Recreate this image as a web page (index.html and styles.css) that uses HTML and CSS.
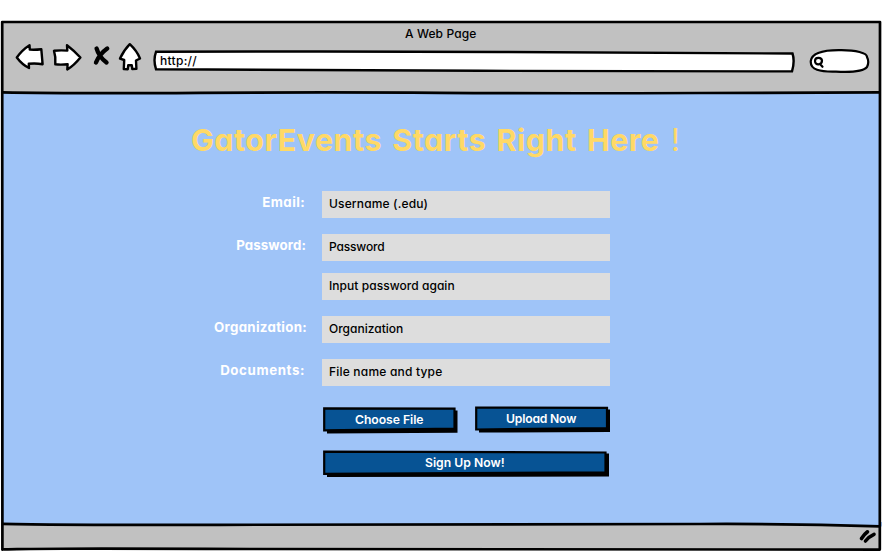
FILE: index.html
```html
<!DOCTYPE html>
<html lang="en">
<head>
<meta charset="utf-8">
<title>A Web Page</title>
<link rel="stylesheet" href="styles.css">
</head>
<body>
<div class="window">
  <header class="chrome">
    <div class="chrome-title"><span class="t-page">A Web Page</span></div>
    <div class="toolbar">
      <svg class="nav" width="126" height="32" viewBox="14 42 126 32">
        <g fill="#fff" stroke="#000" stroke-width="2.4" stroke-linejoin="round">
          <path d="M16.8 57.5Q22 50 29.5 45.2L29.8 49.6Q36 49.9 41.3 49.2L42.6 64.2Q36 63.2 28.8 63.8L29 68Q22 64.5 16.8 57.5Z"/>
          <path d="M54 50.8Q60 50 67.3 50.6L67 45.2Q74 50.5 80.4 57.5 74 65.5 67.3 69.5L67.6 64.2Q61 65 55.3 64.3 56 57 54 50.8Z"/>
          <path d="M129.8 44.2Q137 51 140 58.5L136 60.5 136.4 68.7 132.3 69 131.8 65.3 128.2 65.3 127.8 69.2 123.8 69 124.2 60 120 58.6Q124 50 129.8 44.2Z"/>
        </g>
        <path d="M96.6 48.5Q99 57 106.5 62.500M107.2 48.5Q99.500 54 96 62.5" fill="none" stroke="#000" stroke-width="4.4" stroke-linecap="round"/>
      </svg>
      <div class="address">
        <svg width="644" height="26" viewBox="152 48 644 26"><path d="M156 51.8Q350 51 500 52T792.5 53.5Q795 61 792 71.4Q600 71.7 480 70.8T156 69.2Q153 60 156 51.8Z" fill="#fff" stroke="#000" stroke-width="2.4"/></svg>
        <span class="url">http://</span>
      </div>
      <svg class="search" width="62" height="28" viewBox="808 48 62 28">
        <path d="M810.8 61C812 53 822 50 840 50.2C856 50 867 53 867 57Q869.5 62 867 67C863 72 850 72.3 836 71.6C820 72 810 70 810.8 61Z" fill="#fff" stroke="#000" stroke-width="2.2"/>
        <path d="M815 61C815 57 821.5 57 822 60.5C822 65 815 66 815 61ZM820 64 822.5 66.8" fill="none" stroke="#000" stroke-width="2.2" stroke-linecap="round"/>
      </svg>
    </div>
  </header>
  <main class="page">
    <h1><span class="t-title">GatorEvents Starts Right Here</span><span class="bang">!</span></h1>
    <form class="form">
      <label class="l-email">Email:</label><div class="field f-user">Username (.edu)</div>
      <label class="l-pass">Password:</label><div class="field f-pass">Password</div>
      <div class="field again f-again">Input password again</div>
      <label class="l-org">Organization:</label><div class="field f-org">Organization</div>
      <label class="l-doc">Documents:</label><div class="field f-file">File name and type</div>
      <div class="actions">
        <div class="btn b-choose">
          <svg width="136" height="28" viewBox="0 0 136 28"><path d="M4 5 131 3.5 134.5 3.5V25.8L4 26.6Z"/><path class="face" d="M1.2 1.4 131.5 1.7V21.6L1.2 23.3Z"/></svg>
          <span>Choose File</span>
        </div>
        <div class="btn b-upload">
          <svg width="136" height="28" viewBox="0 0 136 28"><path d="M4 5 135 3.5V26L4 26.6Z"/><path class="face" d="M1.2 1.6 132 1.8V22L1.2 23.5Z"/></svg>
          <span>Upload Now</span>
        </div>
      </div>
      <div class="btn signup">
        <svg width="287" height="28" viewBox="0 0 287 28"><path d="M4 5 286 3.5V26.5L4 27Z"/><path class="face" d="M1.2 1.6 282.5 2.5V22.3L1.2 23.8Z"/></svg>
        <span>Sign Up Now!</span>
      </div>
    </form>
  </main>
  <footer class="status">
    <svg width="18" height="16" viewBox="859 531 18 16"><path d="M861.5 540.5Q864 536.500 867.5 533.8M865.5 543 Q869 538.500 874 536.300" fill="none" stroke="#000" stroke-width="3.6" stroke-linecap="round"/></svg>
  </footer>
  <svg class="outline" width="882" height="552" viewBox="0 0 882 552">
    <path class="gap" d="M700 522 882 522V526.5L790 524Z"/>
    <path stroke-linejoin="round" d="M2.2 22Q440 21.2 880 22Q880.5 280 879.8 549.6Q500 549.8 250 549T2.4 549.6Q1.2 280 2.2 22Z"/>
    <path d="M2 92.3Q70 93.6 200 92.8T440 92.8T700 93T880 92.4"/>
    <path d="M2 523.8Q60 525 220 524.8T700 524Q790 523.5 880 526.4"/>
  </svg>
</div>
</body>
</html>
```
FILE: styles.css
```css
* { box-sizing: border-box; }
body { margin: 0; background: #fff; font-family: Inter, "Liberation Sans", sans-serif; font-feature-settings: "cv11" 1; color: #000; }
.window { position: relative; width: 882px; height: 552px; padding: 21px 2px 2px; display: flex; flex-direction: column; overflow: hidden; }
.outline { position: absolute; inset: 0; fill: none; stroke: #000; stroke-width: 2.7; pointer-events: none; }
.outline .gap { fill: #9fc4f8; stroke: none; }
.chrome { height: 72px; background: #c1c1c1; }
.chrome-title { height: 21px; padding-top: 5px; font-size: 12px; font-weight: 500; letter-spacing: .1px; line-height: 16px; padding-left: 403px; }
.toolbar { display: flex; align-items: flex-start; padding-left: 12px; }
.nav { display: block; flex: none; overflow: visible; }
.address { position: relative; flex: none; margin: 6px 0 0 12px; height: 26px; }
.address svg { display: block; }
.url { position: absolute; left: 8px; top: 4px; font-size: 12px; font-weight: 500; letter-spacing: .3px; line-height: 17px; }
.search { flex: none; margin: 6px 0 0 12px; }
.page { flex: 1; background: #9fc4f8; }
h1 { margin: 28px 0 0 189px; height: 70px; font-size: 30.5px; line-height: 37px; font-weight: 700; color: #ffd966; display: flex; white-space: nowrap; }
.t-title { width: 480px; letter-spacing: .45px; word-spacing: 2.7px; }
.bang { font-weight: 400; }
.form { display: grid; grid-template-columns: 305px 288px; column-gap: 15px; row-gap: 16px; }
label { height: 27px; line-height: 23px; font-size: 13.3px; font-weight: 700; color: #fff; text-align: right; white-space: nowrap; }
.l-email { padding-right: 2px; letter-spacing: .4px; }
.l-pass { padding-right: 1px; letter-spacing: .1px; }
.l-org { letter-spacing: .3px; }
.l-doc { padding-right: 2px; letter-spacing: .6px; }
.field { grid-column: 2; height: 27px; padding-left: 7px; background: #ddd; font-size: 12px; font-weight: 500; line-height: 25px; white-space: nowrap; }
.f-user { letter-spacing: .15px; }
.f-pass { letter-spacing: -.15px; }
.f-again { letter-spacing: .05px; }
.f-file { letter-spacing: .2px; }
.again { margin-top: -4px; }
.actions { grid-column: 2; display: flex; gap: 16px; padding-left: 1px; margin-top: 4px; height: 28px; }
.btn { position: relative; height: 28px; color: #fff; font-size: 12.2px; font-weight: 600; line-height: 25px; white-space: nowrap; }
.btn svg { display: block; }
.btn span { position: absolute; left: 32px; top: 0; letter-spacing: -.05px; }
.btn .face { fill: #075394; stroke: #000; stroke-width: 2.2; }
.b-choose { margin-top: 1px; }
.btn.b-upload span { left: 31px; letter-spacing: -.2px; }
.btn.signup { grid-column: 2; margin-left: 1px; }
.btn.signup span { left: 102px; letter-spacing: 0; }
.status { height: 26px; background: #c1c1c1; display: flex; justify-content: flex-end; align-items: center; padding-right: 3px; }
```
